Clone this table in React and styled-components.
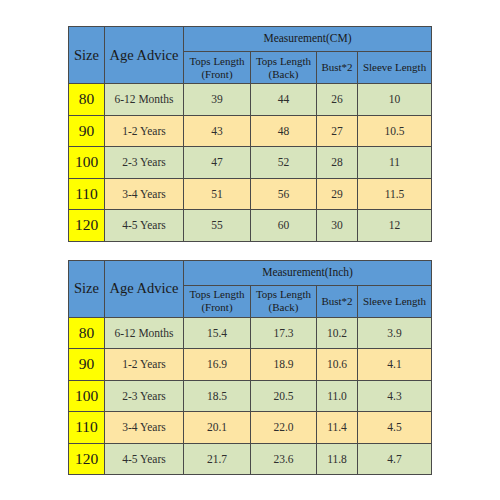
import React from "react";
import styled, { createGlobalStyle } from "styled-components";

const Global = createGlobalStyle`
  html, body { margin: 0; padding: 0; background: #ffffff; }
  body { font-family: "Liberation Serif", "Times New Roman", serif; }
`;

const BLUE = "#5d9bd6";
const YELLOW = "#ffff00";
const GREEN = "#d7e4bd";
const ORANGE = "#fde5a4";

const Page = styled.div`
  width: 500px;
  height: 500px;
  box-sizing: border-box;
  padding: 26px 0 0 68px;
  display: flex;
  flex-direction: column;
  gap: 18px;
`;

const Table = styled.table`
  border-collapse: collapse;
  table-layout: fixed;
  width: 364px;
  font-family: "Liberation Serif", "Times New Roman", serif;
`;

const Col = styled.col`
  width: ${(p) => p.$w}px;
`;

const HeadCell = styled.th`
  border: 1px solid #4a4a4a;
  padding: 0;
  text-align: center;
  vertical-align: middle;
  font-weight: 400;
  line-height: 1.15;
  background: ${BLUE};
  color: #1a1a1a;
  font-size: ${(p) => p.$size}px;
`;

const SizeCell = styled.td`
  border: 1px solid #4a4a4a;
  padding: 0;
  text-align: center;
  vertical-align: middle;
  background: ${YELLOW};
  color: #1a1a1a;
  font-size: 15.5px;
`;

const DataCell = styled.td`
  border: 1px solid #4a4a4a;
  padding: 0;
  text-align: center;
  vertical-align: middle;
  background: ${(p) => (p.$alt ? ORANGE : GREEN)};
  color: #2e2e2e;
  font-size: 11.5px;
`;

const HeadRow = styled.tr`
  height: ${(p) => p.$h}px;
`;

const DataRow = styled.tr`
  height: 31.5px;
`;

const ages = ["6-12 Months", "1-2 Years", "2-3 Years", "3-4 Years", "4-5 Years"];
const sizes = ["80", "90", "100", "110", "120"];
const widths = [36, 79, 67, 66, 41, 74];

const cm = [
  ["39", "44", "26", "10"],
  ["43", "48", "27", "10.5"],
  ["47", "52", "28", "11"],
  ["51", "56", "29", "11.5"],
  ["55", "60", "30", "12"],
];

const inch = [
  ["15.4", "17.3", "10.2", "3.9"],
  ["16.9", "18.9", "10.6", "4.1"],
  ["18.5", "20.5", "11.0", "4.3"],
  ["20.1", "22.0", "11.4", "4.5"],
  ["21.7", "23.6", "11.8", "4.7"],
];

function SizeTable({ unit, data }) {
  return (
    <Table>
      <colgroup>
        {widths.map((w, i) => (
          <Col key={i} $w={w} />
        ))}
      </colgroup>
      <tbody>
        <HeadRow $h={25}>
          <HeadCell rowSpan={2} $size={14.5}>Size</HeadCell>
          <HeadCell rowSpan={2} $size={14.5}>Age Advice</HeadCell>
          <HeadCell colSpan={4} $size={11.5}>Measurement({unit})</HeadCell>
        </HeadRow>
        <HeadRow $h={32}>
          <HeadCell $size={11}>Tops Length<br />(Front)</HeadCell>
          <HeadCell $size={11}>Tops Length<br />(Back)</HeadCell>
          <HeadCell $size={11}>Bust*2</HeadCell>
          <HeadCell $size={11}>Sleeve Length</HeadCell>
        </HeadRow>
        {data.map((row, i) => (
          <DataRow key={i}>
            <SizeCell>{sizes[i]}</SizeCell>
            <DataCell $alt={i % 2 === 1}>{ages[i]}</DataCell>
            {row.map((v, j) => (
              <DataCell key={j} $alt={i % 2 === 1}>{v}</DataCell>
            ))}
          </DataRow>
        ))}
      </tbody>
    </Table>
  );
}

export default function App() {
  return (
    <>
      <Global />
      <Page>
        <SizeTable unit="CM" data={cm} />
        <SizeTable unit="Inch" data={inch} />
      </Page>
    </>
  );
}
